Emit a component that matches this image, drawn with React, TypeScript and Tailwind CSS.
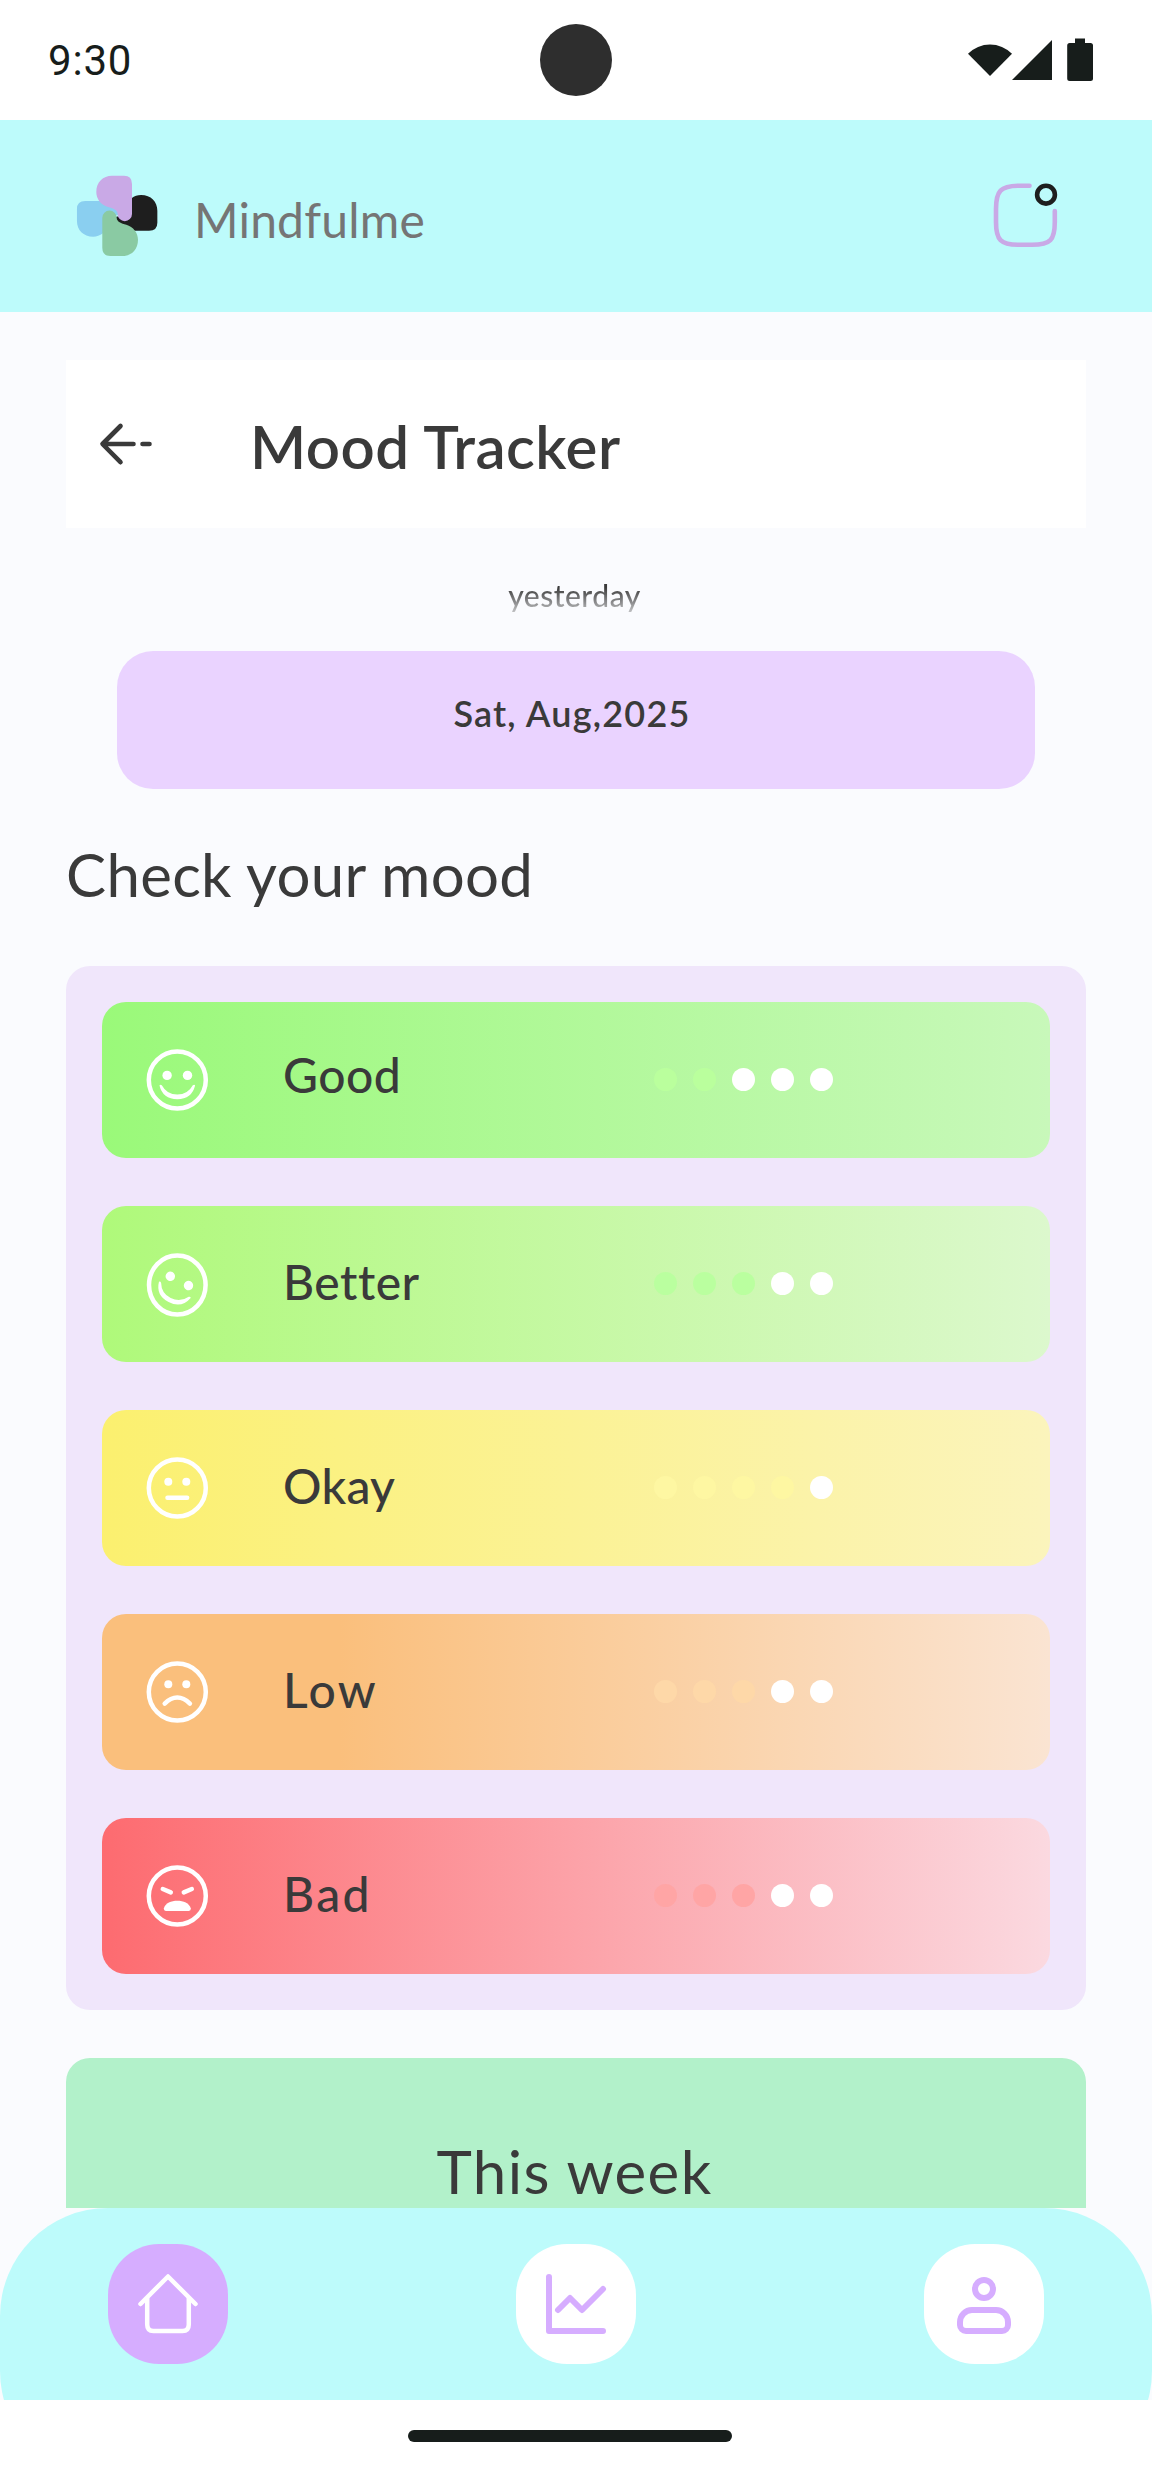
import React from "react";

const PETAL =
  "M42 10.7H54Q62 10.7 62 19V49A7.2 7.2 0 0 1 47.6 49C47.6 45 43 43.2 38 42C31 40 26.3 34 26.3 27C26.3 17 33 10.7 42 10.7Z";

function Logo() {
  return (
    <svg className="mb-[2px] ml-[70px] h-[100px] w-[100px] shrink-0" viewBox="0 0 100 100">
      <path d={PETAL} fill="#8ACFF0" transform="rotate(-90 47.15 50.9)" />
      <path d={PETAL} fill="#1E1E1E" transform="rotate(90 47.15 50.9)" />
      <path d={PETAL} fill="#8ACAA3" transform="rotate(180 47.15 50.9)" />
      <path d={PETAL} fill="#C9A9E6" />
    </svg>
  );
}

function StatusBar() {
  return (
    <div className="flex h-[120px] items-center justify-between bg-white">
      <div className="w-[300px] pt-[1px] pl-12 font-[Roboto] text-[42px] leading-none tracking-[0.8px] text-[#171D1B]">9:30</div>
      <div className="h-[72px] w-[72px] rounded-full bg-[#2E2E2E]" />
      <div className="flex w-[300px] justify-end pr-[57px]">
        <svg className="h-[48px] w-[132px]" viewBox="963 36 132 48" fill="#171D1B">
          <path d="M968 53.7A31 31 0 0 1 1012 53.7L990 76Z" />
          <path d="M1052 40V80H1012Z" />
          <path d="M1075 38.6H1085V43H1090.5Q1093 43 1093 45.5V78.5Q1093 81 1090.5 81H1069.7Q1067.2 81 1067.2 78.5V45.5Q1067.2 43 1069.7 43H1075Z" />
        </svg>
      </div>
    </div>
  );
}

function Header() {
  return (
    <header className="flex h-48 items-center bg-[#BDFBFB]">
      <Logo />
      <div className="ml-[24px] pt-[7px] text-[48px] leading-[60px] tracking-[0.2px] text-[#757575]">Mindfulme</div>
      <svg className="mr-[90px] mb-[2px] ml-auto h-[72px] w-[72px]" viewBox="990 179 72 72" fill="none" strokeWidth="4.6" strokeLinecap="round">
        <path d="M1029.5 185.7H1019C1000.5 185.7 996 191 996 209V222C996 240 1000.5 244.8 1019 244.8H1032C1050.5 244.8 1054.8 240 1054.8 222V211" stroke="#C9A9E6" />
        <circle cx="1046" cy="194.7" r="8.9" stroke="#1E1E1E" />
      </svg>
    </header>
  );
}

type Mood = { label: string; text: string; bar: string; dot: string; filled: number; face: React.ReactNode };

const FACE_RING = <circle r="28.5" />;

const SMILE = (
  <g fill="#fff" stroke="none">
    <circle cx="-10.2" cy="-4.6" r="4.7" />
    <circle cx="10.2" cy="-4.6" r="4.7" />
    <path d="M-17.8 5.5Q-17.2 4 -15.5 5.3Q-10.5 14.6 0 14.6Q10.5 14.6 15.5 5.3Q17.2 4 17.8 5.5Q14.5 19.2 0 19.2Q-14.5 19.2 -17.8 5.5Z" />
  </g>
);

const moods: Mood[] = [
  {
    label: "Good",
    text: "pb-[10px] tracking-[0.5px]",
    bar: "bg-linear-to-r/srgb from-[#9AF979] to-[#C8F8BA]",
    dot: "bg-[#BAFF9D]",
    filled: 2,
    face: (
      <>
        {FACE_RING}
        {SMILE}
      </>
    ),
  },
  {
    label: "Better",
    text: "pb-[4px] tracking-[0.5px]",
    bar: "bg-linear-to-r/srgb from-[#AFF97A] to-[#DCF8CD]",
    dot: "bg-[#BAFF9F]",
    filled: 3,
    face: (
      <>
        <ellipse cy="1" rx="28.3" ry="29.5" />
        <g transform="translate(0 1) rotate(27)">{SMILE}</g>
      </>
    ),
  },
  {
    label: "Okay",
    text: "pb-[4px] tracking-[0.3px]",
    bar: "bg-linear-to-r/srgb from-[#FBF06F] to-[#FBF4BC]",
    dot: "bg-[#FEF7A2]",
    filled: 4,
    face: (
      <>
        {FACE_RING}
        <circle cx="-9" cy="-6.2" r="4" fill="#fff" stroke="none" />
        <circle cx="9" cy="-6.2" r="4" fill="#fff" stroke="none" />
        <path d="M-9.8 9.8H9.8" />
      </>
    ),
  },
  {
    label: "Low",
    text: "pb-[4px] tracking-[2.4px]",
    bar: "bg-linear-to-r/srgb from-[#FABF7C] from-25% to-[#FAE4D2]",
    dot: "bg-[#FED8A8]",
    filled: 3,
    face: (
      <>
        {FACE_RING}
        <circle cx="-9" cy="-7.7" r="4" fill="#fff" stroke="none" />
        <circle cx="9" cy="-7.7" r="4" fill="#fff" stroke="none" />
        <path d="M-12.6 11.6Q-6.5 5.6 0 5.6Q6.5 5.6 12.6 11.6" />
      </>
    ),
  },
  {
    label: "Bad",
    text: "pb-[4px] tracking-[2.4px]",
    bar: "bg-linear-to-r/srgb from-[#FD6B70] to-[#FBD9E0]",
    dot: "bg-[#FFA5A5]",
    filled: 3,
    face: (
      <>
        {FACE_RING}
        <path d="M-14.5 -7L-6.5 -3.7M14.5 -7L6.5 -3.7" />
        <path d="M-13.5 12.5C-12 7 -6 4.8 0 4.8C6 4.8 12 7 13.5 12.5Q13.6 14.9 11.5 14.9H-11.5Q-13.6 14.9 -13.5 12.5Z" fill="#fff" stroke="none" />
      </>
    ),
  },
];

function MoodRow({ mood }: { mood: Mood }) {
  return (
    <div className={`flex h-[156px] items-center rounded-[24px] ${mood.bar}`}>
      <svg className="ml-[39px] h-[72px] w-[72px] shrink-0" viewBox="-36.3 -36 72 72" fill="none" stroke="#fff" strokeWidth="4.5" strokeLinecap="round">
        {mood.face}
      </svg>
      <div className={`ml-[70px] w-[371px] text-[48px] leading-[60px] font-medium whitespace-nowrap ${mood.text}`}>{mood.label}</div>
      <div className="flex gap-4 pb-[2px]">
        {[0, 1, 2, 3, 4].map((i) => (
          <span key={i} className={`h-[23px] w-[23px] rounded-full ${i < mood.filled ? mood.dot : "bg-white"}`} />
        ))}
      </div>
    </div>
  );
}

function NavButton({ active, children }: { active?: boolean; children: React.ReactNode }) {
  return (
    <div className={`flex h-[120px] w-[120px] items-center justify-center rounded-[51px] ${active ? "bg-[#D6ADFF]" : "bg-white"}`}>
      <svg
        className="h-[72px] w-[72px]"
        viewBox="0 0 72 72"
        fill="none"
        stroke={active ? "#fff" : "#D6ADFF"}
        strokeWidth={active ? 4.5 : 6}
        strokeLinecap="round"
        strokeLinejoin="round"
      >
        {children}
      </svg>
    </div>
  );
}

export default function App() {
  return (
    <div className="flex h-[2472px] w-[1152px] flex-col overflow-hidden bg-[#FAFBFE] font-[Lato,sans-serif] text-[#3A3A3A]">
      <StatusBar />
      <Header />
      <main className="flex h-[1896px] flex-col overflow-hidden px-[66px] pt-12">
        <div className="flex h-[168px] shrink-0 items-center bg-white">
          <svg className="ml-[30px] h-[48px] w-[60px]" viewBox="96 420 60 48" fill="none" stroke="#3A3A3A" strokeWidth="4.6" strokeLinecap="round" strokeLinejoin="round">
            <path d="M120.5 426L102.5 444L120.5 462.2M103 444H133.5M142.5 444H149.5" />
          </svg>
          <h1 className="ml-[94px] pt-[4px] text-[60px] leading-[72px] font-semibold tracking-[0.5px]">Mood Tracker</h1>
        </div>
        <div className="mt-[48px] h-[36px] shrink-0 overflow-hidden text-center">
          <span className="inline-block bg-linear-to-b from-[#3A3A3A] from-30% to-[#3A3A3A]/30 to-95% bg-clip-text pr-[3px] text-[30px] leading-[38px] font-medium tracking-[0.5px] text-transparent">
            yesterday
          </span>
        </div>
        <div className="mx-[51px] mt-[39px] h-[138px] shrink-0 rounded-[36px] bg-[#EAD3FF] pt-[38px] pr-[8px] text-center text-[36px] leading-[48px] font-semibold tracking-[1.2px]">
          Sat, Aug,2025
        </div>
        <h2 className="mt-[49px] h-[72px] shrink-0 text-[60px] leading-[72px] tracking-[0.3px]">Check your mood</h2>
        <section className="mt-[56px] flex h-[1044px] shrink-0 flex-col gap-12 rounded-[24px] bg-[#F0E6FB] p-9">
          {moods.map((m) => (
            <MoodRow key={m.label} mood={m} />
          ))}
        </section>
        <section className="mt-12 h-[300px] shrink-0 rounded-t-[24px] bg-[#B2F1CA] pt-[77px] pr-[3px] text-center text-[60px] leading-[72px] tracking-[1.4px]">
          This week
        </section>
      </main>
      <div className="h-48 shrink-0 overflow-hidden">
        <nav className="flex h-[271px] justify-between rounded-[108px] bg-[#BDFBFB] px-[108px] pt-9">
          <NavButton active>
            <path d="M8.5 36L36 8.5L63.5 36" />
            <path d="M15.2 30.5V56.5Q15.2 63 21.5 63H50.5Q56.8 63 56.8 56.5V30.5" />
          </NavButton>
          <NavButton>
            <path d="M9 9V63H63" />
            <path d="M18 42L30 30L42 42L63 21" />
          </NavButton>
          <NavButton>
            <circle cx="36" cy="21" r="9" />
            <path d="M24 42H48A12 12 0 0 1 60 54V57A6 6 0 0 1 54 63H18A6 6 0 0 1 12 57V54A12 12 0 0 1 24 42Z" />
          </NavButton>
        </nav>
      </div>
      <div className="flex h-[72px] shrink-0 items-center bg-white pl-[408px]">
        <div className="h-3 w-[324px] rounded-full bg-[#171D1B]" />
      </div>
    </div>
  );
}
